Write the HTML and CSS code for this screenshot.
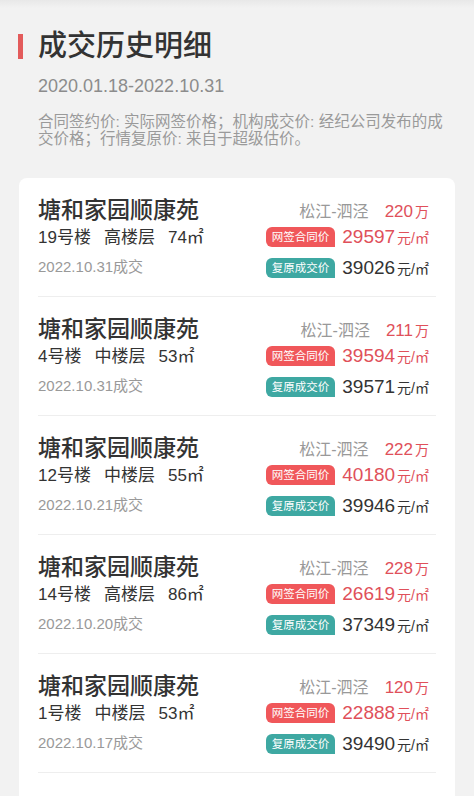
FILE: index.html
```html
<html>
  <head>
    <meta charset="utf-8">
    <link rel="stylesheet" href="styles.css">
  </head>
  <body>
    <div class="head">
      <h1 class="title"><span class="bar"></span>成交历史明细</h1>
      <div class="range">2020.01.18-2022.10.31</div>
      <p class="note">合同签约价: 实际网签价格；机构成交价: 经纪公司发布的成交价格；行情复原价: 来自于超级估价。</p>
    </div>
    <div class="card">
      <div class="deal">
        <div class="info">
          <div class="name">塘和家园顺康苑</div>
          <div class="spec"><span>19号楼</span><span>高楼层</span><span>74㎡</span></div>
          <div class="date">2022.10.31成交</div>
        </div>
        <div class="prices">
          <div class="loc">松江-泗泾<span class="total">220<small>万</small></span></div>
          <div class="grid">
            <span class="tag red">网签合同价</span>
            <span class="val red">29597<small>元/㎡</small></span>
            <span class="tag teal">复原成交价</span>
            <span class="val">39026<small>元/㎡</small></span>
          </div>
        </div>
      </div>
      <div class="deal">
        <div class="info">
          <div class="name">塘和家园顺康苑</div>
          <div class="spec"><span>4号楼</span><span>中楼层</span><span>53㎡</span></div>
          <div class="date">2022.10.31成交</div>
        </div>
        <div class="prices">
          <div class="loc">松江-泗泾<span class="total">211<small>万</small></span></div>
          <div class="grid">
            <span class="tag red">网签合同价</span>
            <span class="val red">39594<small>元/㎡</small></span>
            <span class="tag teal">复原成交价</span>
            <span class="val">39571<small>元/㎡</small></span>
          </div>
        </div>
      </div>
      <div class="deal">
        <div class="info">
          <div class="name">塘和家园顺康苑</div>
          <div class="spec"><span>12号楼</span><span>中楼层</span><span>55㎡</span></div>
          <div class="date">2022.10.21成交</div>
        </div>
        <div class="prices">
          <div class="loc">松江-泗泾<span class="total">222<small>万</small></span></div>
          <div class="grid">
            <span class="tag red">网签合同价</span>
            <span class="val red">40180<small>元/㎡</small></span>
            <span class="tag teal">复原成交价</span>
            <span class="val">39946<small>元/㎡</small></span>
          </div>
        </div>
      </div>
      <div class="deal">
        <div class="info">
          <div class="name">塘和家园顺康苑</div>
          <div class="spec"><span>14号楼</span><span>高楼层</span><span>86㎡</span></div>
          <div class="date">2022.10.20成交</div>
        </div>
        <div class="prices">
          <div class="loc">松江-泗泾<span class="total">228<small>万</small></span></div>
          <div class="grid">
            <span class="tag red">网签合同价</span>
            <span class="val red">26619<small>元/㎡</small></span>
            <span class="tag teal">复原成交价</span>
            <span class="val">37349<small>元/㎡</small></span>
          </div>
        </div>
      </div>
      <div class="deal">
        <div class="info">
          <div class="name">塘和家园顺康苑</div>
          <div class="spec"><span>1号楼</span><span>中楼层</span><span>53㎡</span></div>
          <div class="date">2022.10.17成交</div>
        </div>
        <div class="prices">
          <div class="loc">松江-泗泾<span class="total">120<small>万</small></span></div>
          <div class="grid">
            <span class="tag red">网签合同价</span>
            <span class="val red">22888<small>元/㎡</small></span>
            <span class="tag teal">复原成交价</span>
            <span class="val">39490<small>元/㎡</small></span>
          </div>
        </div>
      </div>
    </div>
  </body>
</html>
```

FILE: styles.css
```css
*{
  margin: 0;
  padding: 0;
  box-sizing: border-box;
}
body{
  background: linear-gradient(#e8e8e8, #f2f2f2 8px);
  color: #333;
  font-family: "Liberation Sans", "Noto Sans CJK SC", sans-serif;
}
.head{
  padding: 29px 26px 0 18px;
}
.title{
  display: flex;
  align-items: center;
  gap: 15px;
  font-size: 29px;
  line-height: 34px;
  font-weight: 500;
  color: #333;
}
.bar{
  width: 5px;
  height: 25px;
  background: #e35b5b;
}
.range{
  margin: 11px 0 0 20px;
  font-size: 18px;
  line-height: 24px;
  color: #8c8c8c;
}
.note{
  margin: 15px 0 0 20px;
  font-size: 15.5px;
  line-height: 17px;
  color: #9a9a9a;
}
.card{
  margin: 31px 19px 0;
  padding-bottom: 40px;
  background: #fff;
  border-radius: 8px;
}
.deal{
  display: flex;
  justify-content: space-between;
  height: 119px;
  margin: 0 19px;
  padding-top: 20px;
  border-bottom: 1px solid #eee;
}
.name{
  font-size: 23px;
  line-height: 24px;
  font-weight: 500;
  color: #333;
}
.spec{
  margin-top: 2px;
  font-size: 17px;
  line-height: 28px;
  color: #333;
}
.spec span{
  margin-right: 13px;
}
.date{
  margin-top: 1px;
  font-size: 15px;
  line-height: 28px;
  color: #999;
}
.prices{
  display: flex;
  flex-direction: column;
  align-items: flex-end;
  padding: 2px 7px 0 0;
}
.loc{
  font-size: 16px;
  line-height: 24px;
  color: #999;
}
.total{
  margin-left: 16px;
  font-size: 17px;
  color: #e0505a;
}
.total small{
  font-size: 14px;
  margin-left: 2px;
}
.grid{
  display: grid;
  grid-template-columns: auto auto;
  column-gap: 7px;
  row-gap: 10px;
  margin-top: 3px;
}
.tag{
  height: 20px;
  padding: 0 6px;
  font-size: 11.5px;
  line-height: 20px;
  color: #fff;
  border-radius: 6px 6px 0 6px;
}
.tag.red{
  background: #f0575a;
}
.tag.teal{
  background: #3ea8a2;
}
.val{
  justify-self: end;
  font-size: 19px;
  line-height: 20px;
  color: #333;
}
.val.red{
  color: #e0505a;
}
.val small{
  margin-left: 2px;
  font-size: 14px;
}
```
